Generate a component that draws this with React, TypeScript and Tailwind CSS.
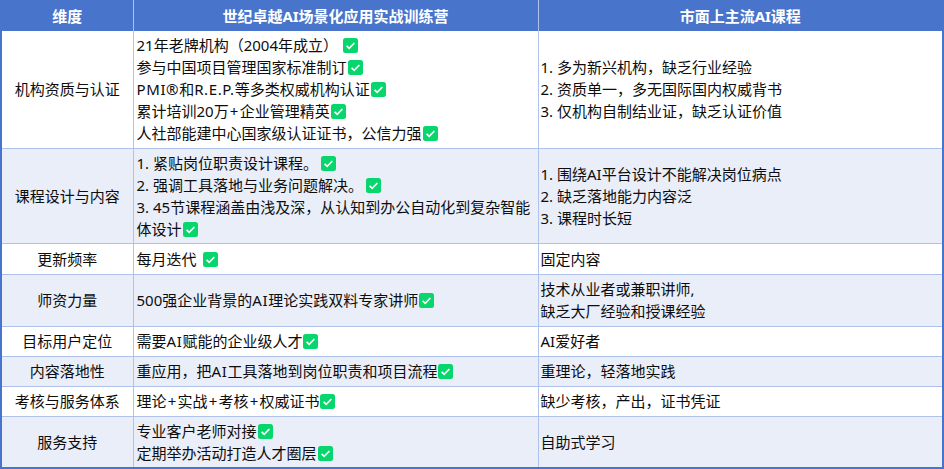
type Line = { text: string; gap?: string };

const rows: { name: string; h: string; a: Line[]; b: string[] }[] = [
  {
    name: "机构资质与认证",
    h: "h-[117px]",
    a: [
      { text: "21年老牌机构（2004年成立）", gap: "ml-[5px]" },
      { text: "参与中国项目管理国家标准制订" },
      { text: "PMI®和R.E.P.等多类权威机构认证" },
      { text: "累计培训20万+企业管理精英" },
      { text: "人社部能建中心国家级认证证书，公信力强" },
    ],
    b: ["1. 多为新兴机构，缺乏行业经验", "2. 资质单一，多无国际国内权威背书", "3. 仅机构自制结业证，缺乏认证价值"],
  },
  {
    name: "课程设计与内容",
    h: "h-[95px]",
    a: [
      { text: "1. 紧贴岗位职责设计课程。", gap: "ml-[3px]" },
      { text: "2. 强调工具落地与业务问题解决。", gap: "ml-[3px]" },
      { text: "3. 45节课程涵盖由浅及深，从认知到办公自动化到复杂智能体设计" },
    ],
    b: ["1. 围绕AI平台设计不能解决岗位病点", "2. 缺乏落地能力内容泛", "3. 课程时长短"],
  },
  { name: "更新频率", h: "h-[31px]", a: [{ text: "每月迭代", gap: "ml-[6px]" }], b: ["固定内容"] },
  {
    name: "师资力量",
    h: "h-[52px]",
    a: [{ text: "500强企业背景的AI理论实践双料专家讲师" }],
    b: ["技术从业者或兼职讲师,", "缺乏大厂经验和授课经验"],
  },
  { name: "目标用户定位", h: "h-[30px]", a: [{ text: "需要AI赋能的企业级人才" }], b: ["AI爱好者"] },
  { name: "内容落地性", h: "h-[30px]", a: [{ text: "重应用，把AI工具落地到岗位职责和项目流程" }], b: ["重理论，轻落地实践"] },
  { name: "考核与服务体系", h: "h-[30px]", a: [{ text: "理论+实战+考核+权威证书" }], b: ["缺少考核，产出，证书凭证"] },
  {
    name: "服务支持",
    h: "h-[52px]",
    a: [{ text: "专业客户老师对接" }, { text: "定期举办活动打造人才圈层" }],
    b: ["自助式学习"],
  },
];

// latin letters and plus signs run wider in the reference font
function Txt({ text }: { text: string }) {
  return (
    <>
      {text.split(/([A-Za-z®.]{2,}|\+)/).map((part, i) =>
        part === "+" ? (
          <span key={i} className="mx-[1.2px]">+</span>
        ) : /^[A-Za-z®.]{2,}$/.test(part) ? (
          <span key={i} className="tracking-[0.6px]">{part}</span>
        ) : (
          part
        ),
      )}
    </>
  );
}

function Check({ gap = "ml-[1px]" }: { gap?: string }) {
  return (
    <svg viewBox="0 0 15 15" className={`inline-block h-[15px] w-[15px] align-[-2px] ${gap}`}>
      <rect width="15" height="15" rx="2.5" fill="#06d66b" />
      <path d="M3.6 7.8 6.2 10.3 11.4 5" fill="none" stroke="#fff" strokeWidth="1.7" />
    </svg>
  );
}

export default function App() {
  return (
    <div className="h-[469px] w-[944px] overflow-hidden bg-white font-['Noto_Sans','Noto_Sans_CJK_SC',sans-serif] text-[15px] leading-[22px] text-[#0d0d0d]">
      <table className="w-full table-fixed border-collapse border-l-2 border-r-2 border-b-2 border-[#4874cb]">
        <colgroup>
          <col className="w-[132px]" />
          <col className="w-[405px]" />
          <col />
        </colgroup>
        <thead>
          <tr className="h-[31px] bg-[#4874cb] text-white">
            <th className="border-r border-[#aec2ec] font-bold">维度</th>
            <th className="border-r border-[#aec2ec] font-bold">世纪卓越AI场景化应用实战训练营</th>
            <th className="font-bold">市面上主流AI课程</th>
          </tr>
        </thead>
        <tbody>
          {rows.map((row, i) => (
            <tr key={row.name} className={`${row.h} ${i % 2 ? "bg-[#e9eef9]" : "bg-white"}`}>
              <td className="border border-l-0 border-t-0 border-[#aec2ec] text-center">{row.name}</td>
              <td className="border border-t-0 border-[#aec2ec] pl-[3px] pr-[2px]">
                {row.a.map((line) => (
                  <div key={line.text}>
                    <Txt text={line.text} />
                    <Check gap={line.gap} />
                  </div>
                ))}
              </td>
              <td className="border border-r-0 border-t-0 border-[#aec2ec] px-[2px]">
                {row.b.map((line) => (
                  <div key={line}>{line}</div>
                ))}
              </td>
            </tr>
          ))}
        </tbody>
      </table>
    </div>
  );
}
